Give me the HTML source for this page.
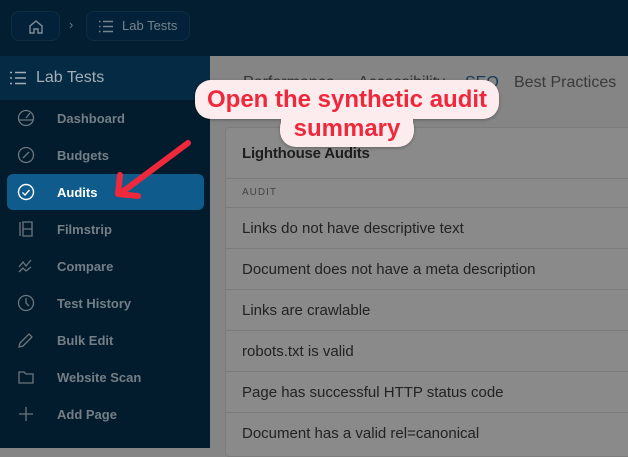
<!DOCTYPE html>
<html><head><style>
*{margin:0;padding:0;box-sizing:border-box}
body{width:628px;height:448px;overflow:hidden;background:#858585;font-family:"Liberation Sans",sans-serif;position:relative}
.top{position:absolute;left:0;top:0;width:628px;height:56px;background:#021e30}
.btn{position:absolute;top:11px;height:30px;border:1px solid #102c3f;border-radius:8px;background:#03223a}
.side{position:absolute;left:0;top:56px;width:210px;height:392px;background:#031c2d}
.sh{height:44px;background:#052a44;color:#a3aeb7;font-size:16px;display:flex;align-items:center;padding-left:10px}
.item{position:absolute;left:7px;width:197px;height:36px;display:flex;align-items:center;color:#747e86;font-weight:bold;font-size:13px;border-radius:6px}
.item span{position:absolute;left:50px}
.item svg{position:absolute;left:10px}
.item svg *{stroke:#6c767e}
.act{background:#0f5c8c;color:#fff}
.act svg *{stroke:#fff}
.card{position:absolute;left:225px;top:127px;width:410px;height:330px;background:#8a8a8a;border:1px solid #7c7c7c;border-radius:4px}
.row{position:absolute;left:0;width:100%;border-top:1px solid #7c7c7c;color:#222;font-size:15px;padding-left:16px}
.tabs{position:absolute;top:74px;font-size:16px;color:#333}
.pill{position:absolute;background:#fdeced;border-radius:16px;color:#f0283c;font-weight:bold;font-size:24px;text-align:center;box-shadow:0 1px 3px rgba(0,0,0,.3);white-space:nowrap}
</style></head><body>
<div class="top">
 <div class="btn" style="left:11px;width:49px"><svg width="49" height="30" viewBox="0 0 49 30"><path d="M18 21v-7l6-5 6 5v7h-4v-4h-4v4z" fill="none" stroke="#7f8d97" stroke-width="1.4"/></svg></div>
 <div style="position:absolute;left:69px;top:17px;color:#6d7b85;font-size:13px">›</div>
 <div class="btn" style="left:86px;width:104px;color:#75838d;font-size:13px;padding:6px 0 0 35px">Lab Tests<svg style="position:absolute;left:12px;top:8px" width="14" height="13"><g stroke="#75838d" stroke-width="1.4"><path d="M0 1.5h1.5M4 1.5h10M0 6.5h1.5M4 6.5h10M0 11.5h1.5M4 11.5h10"/></g></svg></div>
</div>
<div class="side">
 <div class="sh"><svg width="16" height="14" style="margin-right:10px"><g stroke="#a3aeb7" stroke-width="1.5"><path d="M0 1.5h2M5 1.5h11M0 7h2M5 7h11M0 12.5h2M5 12.5h11"/></g></svg>Lab Tests</div>
 <div class="item" style="top:44px"><svg width="18" height="18"><circle cx="9" cy="9" r="7.5" fill="none" stroke-width="1.3"/><path d="M2 11h14M9 9l4-5" stroke-width="1.3"/></svg><span>Dashboard</span></div>
 <div class="item" style="top:81px"><svg width="18" height="18"><circle cx="9" cy="9" r="7.5" fill="none" stroke-width="1.3"/><path d="M6 12l6-6" stroke-width="1.3"/></svg><span>Budgets</span></div>
 <div class="item act" style="top:118px"><svg width="18" height="18"><circle cx="9" cy="9" r="7.5" fill="none" stroke-width="1.4"/><path d="M5.5 9.5l2.5 2.5 4.5-5" fill="none" stroke-width="1.4"/></svg><span>Audits</span></div>
 <div class="item" style="top:155px"><svg width="18" height="18"><path d="M3 2v14M6 2h9v14H6zM6 9h9" fill="none" stroke-width="1.3"/></svg><span>Filmstrip</span></div>
 <div class="item" style="top:192px"><svg width="18" height="18"><path d="M2 10l4-5 3 4 5-6M2 15l4-4 3 3 5-4" fill="none" stroke-width="1.3"/></svg><span>Compare</span></div>
 <div class="item" style="top:229px"><svg width="18" height="18"><circle cx="9" cy="9" r="7.5" fill="none" stroke-width="1.3"/><path d="M9 4v5l3 3" fill="none" stroke-width="1.3"/></svg><span>Test History</span></div>
 <div class="item" style="top:266px"><svg width="18" height="18"><path d="M2 16l1-4 9-9 3 3-9 9z" fill="none" stroke-width="1.3"/></svg><span>Bulk Edit</span></div>
 <div class="item" style="top:303px"><svg width="18" height="18"><path d="M2 4h5l2 2h7v9H2z" fill="none" stroke-width="1.3"/></svg><span>Website Scan</span></div>
 <div class="item" style="top:340px"><svg width="18" height="18"><path d="M9 2v14M2 9h14" stroke-width="1.3"/></svg><span>Add Page</span></div>
</div>
<div class="tabs" style="left:243px">Performance</div>
<div class="tabs" style="left:358px">Accessibility</div>
<div class="tabs" style="left:465px;color:#1c3a52">SEO</div>
<div class="tabs" style="left:514px;color:#3a3a3a">Best Practices</div>
<div class="card">
 <div style="position:absolute;left:16px;top:17px;font-size:15px;color:#1e1e1e;font-weight:bold;letter-spacing:-.2px">Lighthouse Audits</div>
 <div class="row" style="top:50px;height:29px;font-size:10px;letter-spacing:1px;color:#444;padding-top:8px">AUDIT</div>
 <div class="row" style="top:79px;padding-top:12px">Links do not have descriptive text</div>
 <div class="row" style="top:120px;padding-top:12px">Document does not have a meta description</div>
 <div class="row" style="top:161px;padding-top:12px">Links are crawlable</div>
 <div class="row" style="top:202px;padding-top:12px">robots.txt is valid</div>
 <div class="row" style="top:243px;padding-top:12px">Page has successful HTTP status code</div>
 <div class="row" style="top:284px;padding-top:12px">Document has a valid rel=canonical</div>
</div>
<div class="pill" style="left:280px;top:112px;width:134px;height:35px;padding-top:4px">summary</div>
<div class="pill" style="left:195px;top:80px;width:304px;height:39px;padding-top:6px">Open the synthetic audit</div>
<div class="pill" style="left:281px;top:112px;width:132px;height:34px;padding-top:3px;box-shadow:none;border-radius:0 0 16px 16px">summary</div>
<svg style="position:absolute;left:0;top:0" width="628" height="448"><path d="M188 143L121 193M120 175l-2 19 20 2" fill="none" stroke="#f0283c" stroke-width="6" stroke-linecap="round" stroke-linejoin="round"/></svg>
</body></html>
